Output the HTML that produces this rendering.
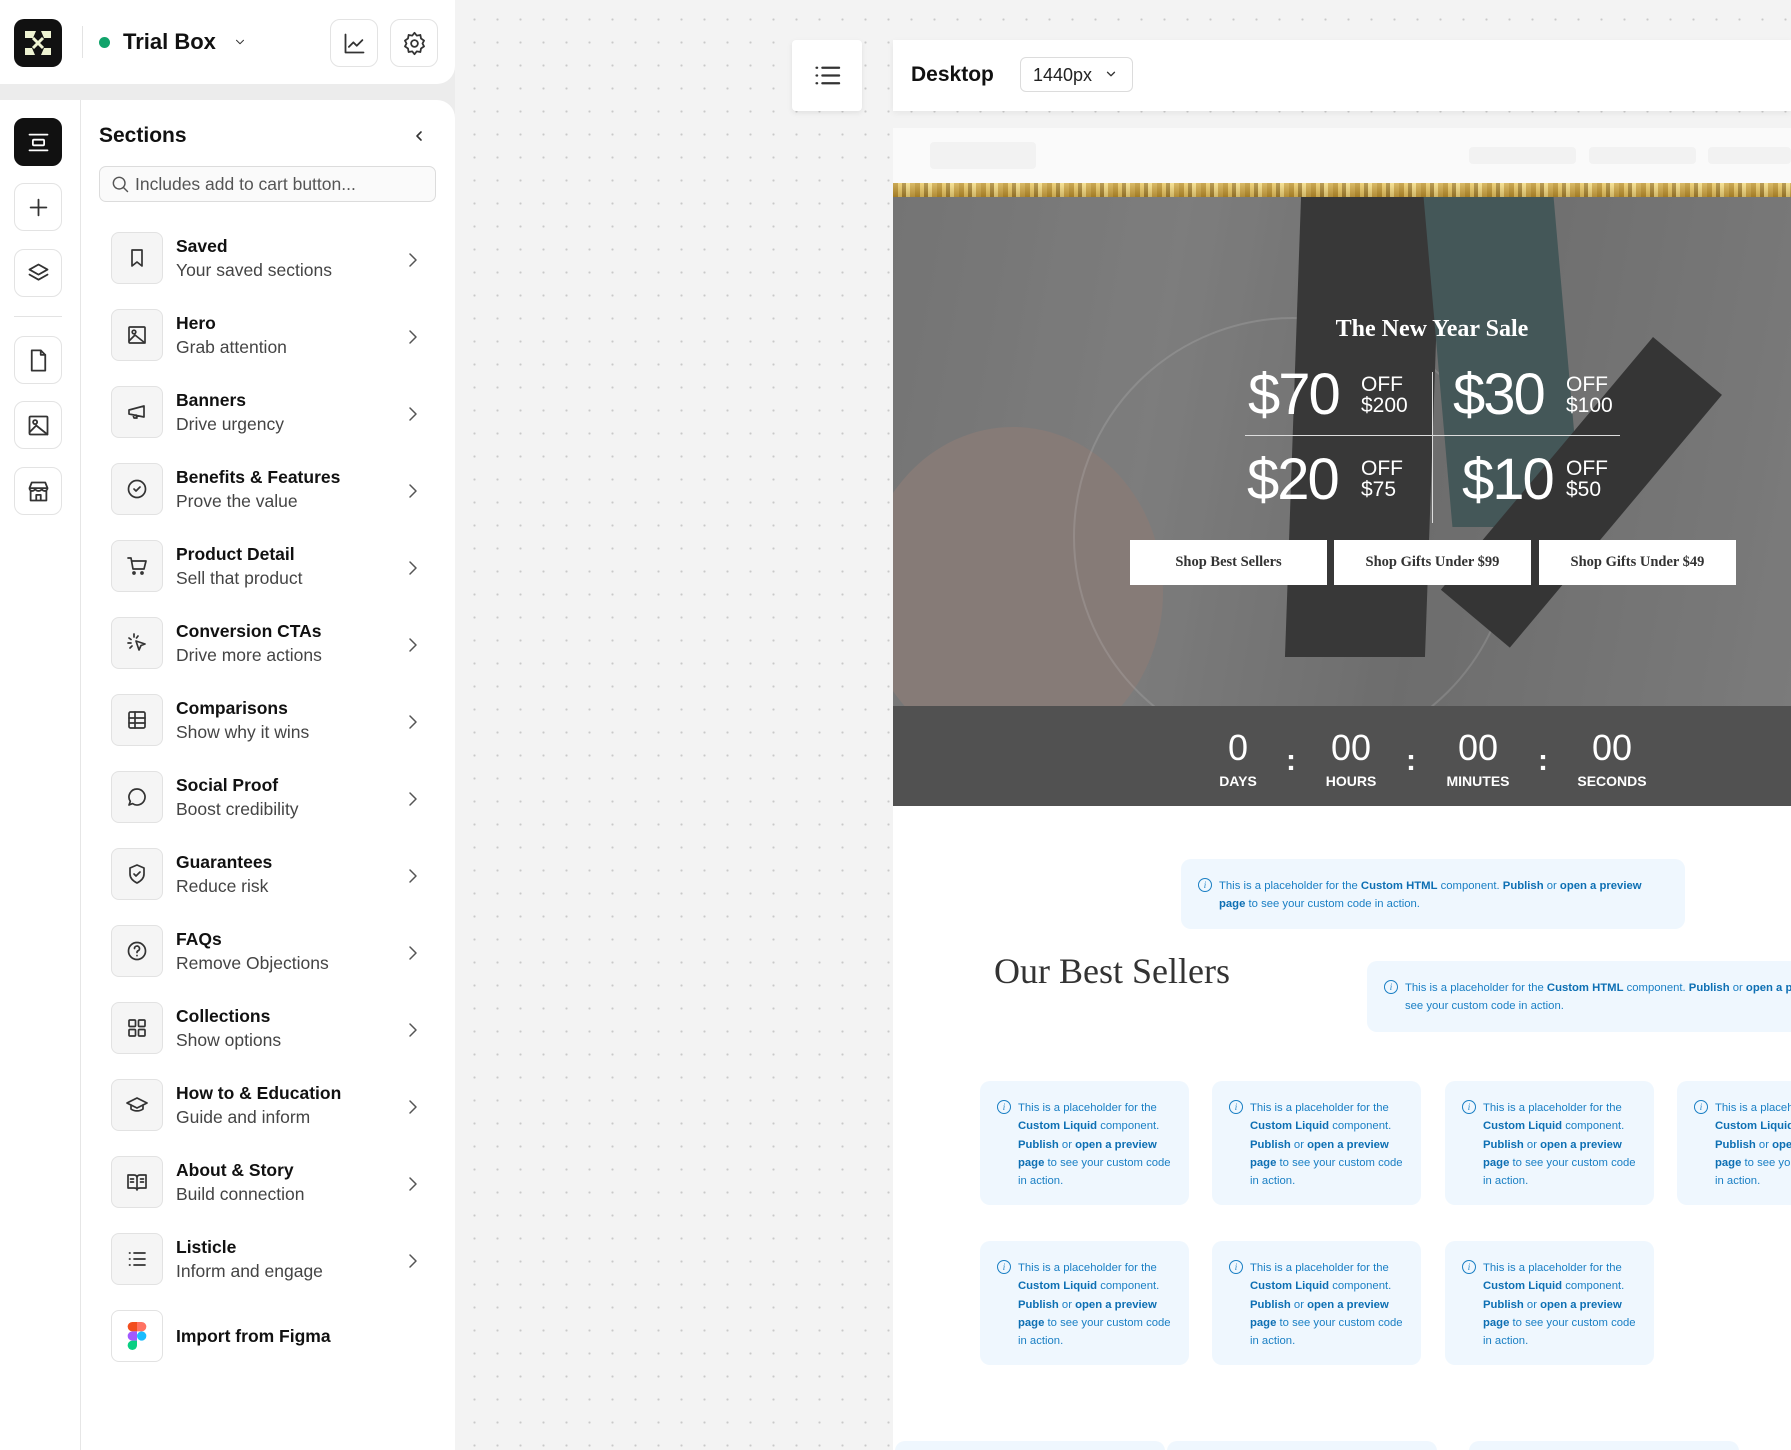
<!DOCTYPE html>
<html><head><meta charset="utf-8"><style>
*{box-sizing:border-box;margin:0;padding:0}
html,body{overflow:hidden}
body{width:1791px;height:1450px;background:#ececec;font-family:"Liberation Sans",sans-serif;position:relative;color:#111}
#wrap{position:absolute;left:0;top:0;width:1791px;height:1450px;overflow:hidden}
.abs{position:absolute}
.canvas{left:455px;top:0;width:1336px;height:1450px;background-color:#f3f3f3;background-image:radial-gradient(#c9c9c9 1px,transparent 1.2px);background-size:23px 23px;background-position:8px 8px}
.topcard{left:0;top:0;width:455px;height:84px;background:#fff;border-radius:0 0 18px 0}
.side{left:0;top:100px;width:455px;height:1350px;background:#fff;border-radius:0 18px 0 0}
.rail{left:80px;top:100px;width:1px;height:1350px;background:#e6e6e6}
.rb{position:absolute;left:14px;width:48px;height:48px;border:1px solid #e3e3e3;border-radius:10px;background:#fff;display:flex;align-items:center;justify-content:center}
.rb svg.i{width:27px;height:27px;stroke-width:1.6}
.row{position:absolute;left:111px;width:320px;height:60px}
.ib{position:absolute;left:0;top:4px;width:52px;height:52px;border:1px solid #e2e2e2;border-radius:8px;background:#f5f5f5;display:flex;align-items:center;justify-content:center}
.t1{position:absolute;left:65px;top:8px;font-size:17.5px;font-weight:bold;color:#111}
.t2{position:absolute;left:65px;top:32px;font-size:17.5px;color:#444}
.chev{position:absolute;left:290px;top:20px;stroke:#555!important;stroke-width:1.5!important}
svg.i{width:24px;height:24px;fill:none;stroke:#333;stroke-width:1.7;stroke-linecap:round;stroke-linejoin:round}
.ph{position:absolute;background:#eff7fe;border-radius:10px;color:#1a7fc4;font-size:11.3px;line-height:18.3px;padding:18px 14px 0 38px}
.ph b{color:#0d6fb3}
.ph:before{content:"i";position:absolute;left:17px;top:19px;width:12px;height:12px;border:1px solid #1a7fc4;border-radius:50%;font-size:9px;line-height:12px;text-align:center;font-style:italic;font-family:"Liberation Serif",serif}
.price{position:absolute;color:#fff;font-size:58px;font-weight:300;letter-spacing:-2px;line-height:58px}
.off{position:absolute;color:#fff;font-size:21px;line-height:21px}
.btn{position:absolute;top:540px;height:45px;width:197px;background:#fff;font-family:"Liberation Serif",serif;font-weight:bold;font-size:14.5px;color:#333;display:flex;align-items:center;justify-content:center}
.num{position:absolute;top:727px;color:#fff;font-size:36px;width:120px;text-align:center;margin-left:-60px}
.lab{position:absolute;top:773px;color:#fff;font-size:14px;font-weight:bold;width:120px;text-align:center;margin-left:-60px}
.col{position:absolute;top:744px;color:#fff;font-size:30px;font-weight:bold}
</style></head><body><div id="wrap">
<div class="abs canvas"></div>
<div class="abs topcard"></div>
<div class="abs" style="left:14px;top:19px;width:48px;height:48px;background:#111;border-radius:10px">
<svg width="48" height="48" viewBox="0 0 48 48"><path d="M11 12h11l-3 7h-8zM37 12h-10l3 7h7zM11 36h10l-3-7h-7zM37 36h-10l3-7h7z" fill="#eef3d2"/><circle cx="24" cy="24" r="5" fill="#111"/><path d="M19 19l10 10M29 19l-10 10" stroke="#eef3d2" stroke-width="3"/></svg></div>
<div class="abs" style="left:82px;top:26px;width:1px;height:32px;background:#e3e3e3"></div>
<div class="abs" style="left:99px;top:37px;width:11px;height:11px;border-radius:50%;background:#11a36b"></div>
<div class="abs" style="left:123px;top:29px;font-size:22px;font-weight:bold;color:#111">Trial Box</div>
<svg class="abs i" style="left:233px;top:35px;width:14px;height:14px" viewBox="0 0 24 24"><path d="M6 9l6 6 6-6"/></svg>
<div class="rb" style="left:330px;top:19px"><svg class="i" viewBox="0 0 24 24"><path d="M4 4v16h16M7 15l4-4 3 3 5-5"/></svg></div>
<div class="rb" style="left:390px;top:19px"><svg class="i" viewBox="0 0 24 24"><circle cx="12" cy="12" r="3"/><path d="M12 2.5l2 2.5 3.2-.6.6 3.2 2.7 1.8-1.4 2.6 1.4 2.6-2.7 1.8-.6 3.2-3.2-.6-2 2.5-2-2.5-3.2.6-.6-3.2-2.7-1.8 1.4-2.6-1.4-2.6 2.7-1.8.6-3.2 3.2.6z"/></svg></div>

<div class="abs side"></div>
<div class="abs rail"></div>
<div class="rb" style="top:118px;background:#111;border-color:#111"><svg class="i" viewBox="0 0 24 24" style="stroke:#fff"><path d="M4 5h16M4 19h16"/><rect x="7" y="9.5" width="10" height="5" rx="1"/></svg></div>
<div class="rb" style="top:183px"><svg class="i" viewBox="0 0 24 24"><path d="M12 5v14M5 12h14"/></svg></div>
<div class="rb" style="top:249px"><svg class="i" viewBox="0 0 24 24"><path d="M12 4l8 4.5-8 4.5-8-4.5z"/><path d="M4 13l8 4.5 8-4.5"/></svg></div>
<div class="abs" style="left:14px;top:316px;width:48px;height:1px;background:#e3e3e3"></div>
<div class="rb" style="top:336px"><svg class="i" viewBox="0 0 24 24"><path d="M6 3h8l4 4v14H6z"/><path d="M14 3v4h4"/></svg></div>
<div class="rb" style="top:401px"><svg class="i" viewBox="0 0 24 24"><rect x="4" y="4" width="16" height="16" rx="1"/><circle cx="9" cy="9" r="1.8"/><path d="M4 18l6-6 10 8"/></svg></div>
<div class="rb" style="top:467px"><svg class="i" viewBox="0 0 24 24"><path d="M4 9l2-5h12l2 5c0 1.5-1.3 2.5-2.7 2.5S15 10.5 15 9c0 1.5-1.3 2.5-3 2.5S9 10.5 9 9c0 1.5-1.3 2.5-2.7 2.5S4 10.5 4 9zM5 11v9h14v-9M10 20v-5h4v5M4 9h16"/></svg></div>

<div class="abs" style="left:99px;top:124px;font-size:21px;font-weight:bold">Sections</div>
<svg class="abs i" style="left:411px;top:128px;width:16px;height:16px;stroke-width:2.4" viewBox="0 0 24 24"><path d="M15 6l-6 6 6 6"/></svg>
<div class="abs" style="left:99px;top:166px;width:337px;height:36px;border:1px solid #dcdcdc;border-radius:7px;background:#fafafa;font-size:17.5px;color:#555;padding:7px 0 0 35px">Includes add to cart button...</div>
<svg class="abs i" style="left:110px;top:174px;width:20px;height:20px;stroke:#555" viewBox="0 0 24 24"><circle cx="11" cy="11" r="7"/><path d="M16 16l5 5"/></svg>

<div class="row" style="top:228px"><div class="ib"><svg class="i" viewBox="0 0 24 24"><path d="M7 4h10v16l-5-4-5 4z"/></svg></div><div class="t1">Saved</div><div class="t2">Your saved sections</div><svg class="i chev" viewBox="0 0 24 24"><path d="M9 6l6 6-6 6"/></svg></div>
<div class="row" style="top:305px"><div class="ib"><svg class="i" viewBox="0 0 24 24"><rect x="4" y="4" width="16" height="16" rx="1"/><circle cx="9" cy="9" r="1.8"/><path d="M4 18l6-6 10 8"/></svg></div><div class="t1">Hero</div><div class="t2">Grab attention</div><svg class="i chev" viewBox="0 0 24 24"><path d="M9 6l6 6-6 6"/></svg></div>
<div class="row" style="top:382px"><div class="ib"><svg class="i" viewBox="0 0 24 24"><path d="M4 10l15-4v11L4 14zM4 10v4M8 15l1 3h3l-1-3"/></svg></div><div class="t1">Banners</div><div class="t2">Drive urgency</div><svg class="i chev" viewBox="0 0 24 24"><path d="M9 6l6 6-6 6"/></svg></div>
<div class="row" style="top:459px"><div class="ib"><svg class="i" viewBox="0 0 24 24"><circle cx="12" cy="12" r="8.5"/><path d="M9 12l2 2 4-4"/></svg></div><div class="t1">Benefits &amp; Features</div><div class="t2">Prove the value</div><svg class="i chev" viewBox="0 0 24 24"><path d="M9 6l6 6-6 6"/></svg></div>
<div class="row" style="top:536px"><div class="ib"><svg class="i" viewBox="0 0 24 24"><path d="M3 4h3l2 11h11l2-8H7"/><circle cx="9" cy="19" r="1"/><circle cx="17" cy="19" r="1"/></svg></div><div class="t1">Product Detail</div><div class="t2">Sell that product</div><svg class="i chev" viewBox="0 0 24 24"><path d="M9 6l6 6-6 6"/></svg></div>
<div class="row" style="top:613px"><div class="ib"><svg class="i" viewBox="0 0 24 24"><path d="M11 10l9 3-4 1.5L14 19zM9 3v3M4 7l2 1.5M3 12h3M5 17l2-2M13 5l-1.5 2"/></svg></div><div class="t1">Conversion CTAs</div><div class="t2">Drive more actions</div><svg class="i chev" viewBox="0 0 24 24"><path d="M9 6l6 6-6 6"/></svg></div>
<div class="row" style="top:690px"><div class="ib"><svg class="i" viewBox="0 0 24 24"><rect x="4" y="4" width="16" height="16" rx="1.5"/><path d="M4 10h16M4 15h16M10 4v16"/></svg></div><div class="t1">Comparisons</div><div class="t2">Show why it wins</div><svg class="i chev" viewBox="0 0 24 24"><path d="M9 6l6 6-6 6"/></svg></div>
<div class="row" style="top:767px"><div class="ib"><svg class="i" viewBox="0 0 24 24"><path d="M12 4a8 8 0 1 1-4.5 14.6L4 20l1.3-3.6A8 8 0 0 1 12 4z"/></svg></div><div class="t1">Social Proof</div><div class="t2">Boost credibility</div><svg class="i chev" viewBox="0 0 24 24"><path d="M9 6l6 6-6 6"/></svg></div>
<div class="row" style="top:844px"><div class="ib"><svg class="i" viewBox="0 0 24 24"><path d="M12 3l7 3v6c0 4-3 7-7 9-4-2-7-5-7-9V6z"/><path d="M9 12l2 2 4-4"/></svg></div><div class="t1">Guarantees</div><div class="t2">Reduce risk</div><svg class="i chev" viewBox="0 0 24 24"><path d="M9 6l6 6-6 6"/></svg></div>
<div class="row" style="top:921px"><div class="ib"><svg class="i" viewBox="0 0 24 24"><circle cx="12" cy="12" r="8.5"/><path d="M9.5 9.5a2.5 2.5 0 1 1 3.5 2.3c-.7.3-1 .9-1 1.7M12 16.5v.2"/></svg></div><div class="t1">FAQs</div><div class="t2">Remove Objections</div><svg class="i chev" viewBox="0 0 24 24"><path d="M9 6l6 6-6 6"/></svg></div>
<div class="row" style="top:998px"><div class="ib"><svg class="i" viewBox="0 0 24 24"><rect x="4" y="4" width="6.5" height="6.5" rx="1"/><rect x="13.5" y="4" width="6.5" height="6.5" rx="1"/><rect x="4" y="13.5" width="6.5" height="6.5" rx="1"/><rect x="13.5" y="13.5" width="6.5" height="6.5" rx="1"/></svg></div><div class="t1">Collections</div><div class="t2">Show options</div><svg class="i chev" viewBox="0 0 24 24"><path d="M9 6l6 6-6 6"/></svg></div>
<div class="row" style="top:1075px"><div class="ib"><svg class="i" viewBox="0 0 24 24"><path d="M2 10l10-5 10 5-10 5z"/><path d="M6 12v4c3 2.5 9 2.5 12 0v-4"/></svg></div><div class="t1">How to &amp; Education</div><div class="t2">Guide and inform</div><svg class="i chev" viewBox="0 0 24 24"><path d="M9 6l6 6-6 6"/></svg></div>
<div class="row" style="top:1152px"><div class="ib"><svg class="i" viewBox="0 0 24 24"><path d="M3 5h6c2 0 3 1 3 3v12c0-1.5-1-2-3-2H3zM21 5h-6c-2 0-3 1-3 3v12c0-1.5 1-2 3-2h6zM5.5 9h3M5.5 12h3M15.5 9h3M15.5 12h3"/></svg></div><div class="t1">About &amp; Story</div><div class="t2">Build connection</div><svg class="i chev" viewBox="0 0 24 24"><path d="M9 6l6 6-6 6"/></svg></div>
<div class="row" style="top:1229px"><div class="ib"><svg class="i" viewBox="0 0 24 24"><path d="M9 6h11M9 12h11M9 18h11M4.5 6h.5M4.5 12h.5M4.5 18h.5"/></svg></div><div class="t1">Listicle</div><div class="t2">Inform and engage</div><svg class="i chev" viewBox="0 0 24 24"><path d="M9 6l6 6-6 6"/></svg></div>
<div class="row" style="top:1306px"><div class="ib" style="background:#fff"><svg width="20" height="28" viewBox="0 0 20 30"><path d="M5 0h5v10H5a5 5 0 0 1 0-10z" fill="#f24e1e"/><path d="M10 0h5a5 5 0 0 1 0 10h-5z" fill="#ff7262"/><path d="M5 10h5v10H5a5 5 0 0 1 0-10z" fill="#a259ff"/><circle cx="15" cy="15" r="5" fill="#1abcfe"/><path d="M5 20h5v5a5 5 0 1 1-5-5z" fill="#0acf83"/></svg></div><div class="t1" style="top:20px">Import from Figma</div></div>

<div class="abs" style="left:792px;top:40px;width:70px;height:71px;background:#fff;border-radius:4px;box-shadow:0 2px 6px rgba(0,0,0,.08)"><svg class="i" style="position:absolute;left:20px;top:20px;width:31px;height:31px" viewBox="0 0 24 24"><path d="M8 6h13M8 12h13M8 18h13M3.5 6h.5M3.5 12h.5M3.5 18h.5"/></svg></div>
<div class="abs" style="left:893px;top:40px;width:898px;height:71px;background:#fff;box-shadow:0 2px 6px rgba(0,0,0,.06)"></div>
<div class="abs" style="left:911px;top:63px;font-size:21px;font-weight:bold">Desktop</div>
<div class="abs" style="left:1020px;top:57px;width:113px;height:35px;border:1px solid #dcdcdc;border-radius:6px;font-size:18px;padding:7px 0 0 12px;color:#222">1440px</div>
<svg class="abs i" style="left:1104px;top:67px;width:14px;height:14px;stroke-width:2.2" viewBox="0 0 24 24"><path d="M6 9l6 6 6-6"/></svg>

<div class="abs" style="left:893px;top:128px;width:898px;height:1322px;background:#fff"></div>
<div class="abs" style="left:893px;top:128px;width:898px;height:55px;background:#fafafa"></div>
<div class="abs" style="left:930px;top:142px;width:106px;height:27px;background:#f2f2f2;border-radius:4px"></div>
<div class="abs" style="left:1469px;top:147px;width:107px;height:17px;background:#f2f2f2;border-radius:4px"></div>
<div class="abs" style="left:1589px;top:147px;width:107px;height:17px;background:#f2f2f2;border-radius:4px"></div>
<div class="abs" style="left:1708px;top:147px;width:83px;height:17px;background:#f2f2f2;border-radius:4px"></div>
<div class="abs" style="left:893px;top:183px;width:898px;height:14px;background:linear-gradient(180deg,rgba(255,240,180,.3),rgba(120,90,20,.3)),repeating-linear-gradient(90deg,#b48a2c 0 5px,#e8c769 5px 9px,#9c7a2e 9px 13px,#f3dc8a 13px 17px,#c9a245 17px 22px)"></div>
<div class="abs" style="left:893px;top:197px;width:898px;height:509px;overflow:hidden;background:linear-gradient(100deg,#808080 0%,#8d8d8d 30%,#767676 60%,#8a8a8a 100%)">
 <div class="abs" style="left:-30px;top:230px;width:300px;height:330px;border-radius:50%;background:#9a8a85"></div>
 <div class="abs" style="left:180px;top:120px;width:440px;height:440px;border-radius:50%;border:2px solid rgba(255,255,255,.2)"></div>
 <div class="abs" style="left:400px;top:0;width:140px;height:460px;background:#2a2a2a;transform:skewX(-2deg)"></div>
 <div class="abs" style="left:545px;top:0;width:130px;height:330px;background:#3b5658;transform:skewX(5deg)"></div>
 <div class="abs" style="left:760px;top:140px;width:90px;height:330px;background:#262626;transform:rotate(40deg);transform-origin:top left"></div>
 <div class="abs" style="left:0;top:0;width:898px;height:509px;background:rgba(90,90,90,.3)"></div>
</div>
<div class="abs" style="left:1232px;top:316px;width:400px;text-align:center;color:#fff;font-family:'Liberation Serif',serif;font-weight:bold;font-size:24px">The New Year Sale</div>
<div class="price" style="left:1248px;top:366px">$70</div><div class="off" style="left:1361px;top:374px">OFF<br>$200</div>
<div class="price" style="left:1453px;top:366px">$30</div><div class="off" style="left:1566px;top:374px">OFF<br>$100</div>
<div class="price" style="left:1247px;top:451px">$20</div><div class="off" style="left:1361px;top:458px">OFF<br>$75</div>
<div class="price" style="left:1462px;top:451px">$10</div><div class="off" style="left:1566px;top:458px">OFF<br>$50</div>
<div class="abs" style="left:1245px;top:435px;width:375px;height:1px;background:#ddd"></div>
<div class="abs" style="left:1432px;top:372px;width:1px;height:151px;background:#ddd"></div>
<div class="btn" style="left:1130px">Shop Best Sellers</div>
<div class="btn" style="left:1334px">Shop Gifts Under $99</div>
<div class="btn" style="left:1539px">Shop Gifts Under $49</div>
<div class="abs" style="left:893px;top:706px;width:898px;height:100px;background:#515151"></div>
<div class="num" style="left:1238px">0</div><div class="lab" style="left:1238px">DAYS</div>
<div class="num" style="left:1351px">00</div><div class="lab" style="left:1351px">HOURS</div>
<div class="num" style="left:1478px">00</div><div class="lab" style="left:1478px">MINUTES</div>
<div class="num" style="left:1612px">00</div><div class="lab" style="left:1612px">SECONDS</div>
<div class="col" style="left:1286px">:</div><div class="col" style="left:1406px">:</div><div class="col" style="left:1538px">:</div>

<div class="ph" style="left:1181px;top:859px;width:504px;height:70px">This is a placeholder for the <b>Custom HTML</b> component. <b>Publish</b> or <b>open a preview page</b> to see your custom code in action.</div>
<div class="abs" style="left:994px;top:950px;font-family:'Liberation Serif',serif;font-size:36px;color:#333">Our Best Sellers</div>
<div class="ph" style="left:1367px;top:961px;width:440px;height:71px;white-space:nowrap">This is a placeholder for the <b>Custom HTML</b> component. <b>Publish</b> or <b>open a preview page</b> to<br>see your custom code in action.</div>

<div class="ph" style="left:980px;top:1081px;width:209px;height:124px">This is a placeholder for the <b>Custom Liquid</b> component. <b>Publish</b> or <b>open a preview page</b> to see your custom code in action.</div>
<div class="ph" style="left:1212px;top:1081px;width:209px;height:124px">This is a placeholder for the <b>Custom Liquid</b> component. <b>Publish</b> or <b>open a preview page</b> to see your custom code in action.</div>
<div class="ph" style="left:1445px;top:1081px;width:209px;height:124px">This is a placeholder for the <b>Custom Liquid</b> component. <b>Publish</b> or <b>open a preview page</b> to see your custom code in action.</div>
<div class="ph" style="left:1677px;top:1081px;width:209px;height:124px">This is a placeholder for the <b>Custom Liquid</b> component. <b>Publish</b> or <b>open a preview page</b> to see your custom code in action.</div>
<div class="ph" style="left:980px;top:1241px;width:209px;height:124px">This is a placeholder for the <b>Custom Liquid</b> component. <b>Publish</b> or <b>open a preview page</b> to see your custom code in action.</div>
<div class="ph" style="left:1212px;top:1241px;width:209px;height:124px">This is a placeholder for the <b>Custom Liquid</b> component. <b>Publish</b> or <b>open a preview page</b> to see your custom code in action.</div>
<div class="ph" style="left:1445px;top:1241px;width:209px;height:124px">This is a placeholder for the <b>Custom Liquid</b> component. <b>Publish</b> or <b>open a preview page</b> to see your custom code in action.</div>
<div class="abs" style="left:895px;top:1441px;width:270px;height:20px;background:#eff7fe;border-radius:10px"></div>
<div class="abs" style="left:1167px;top:1441px;width:270px;height:20px;background:#eff7fe;border-radius:10px"></div>
<div class="abs" style="left:1469px;top:1441px;width:270px;height:20px;background:#eff7fe;border-radius:10px"></div>
</div></body></html>
